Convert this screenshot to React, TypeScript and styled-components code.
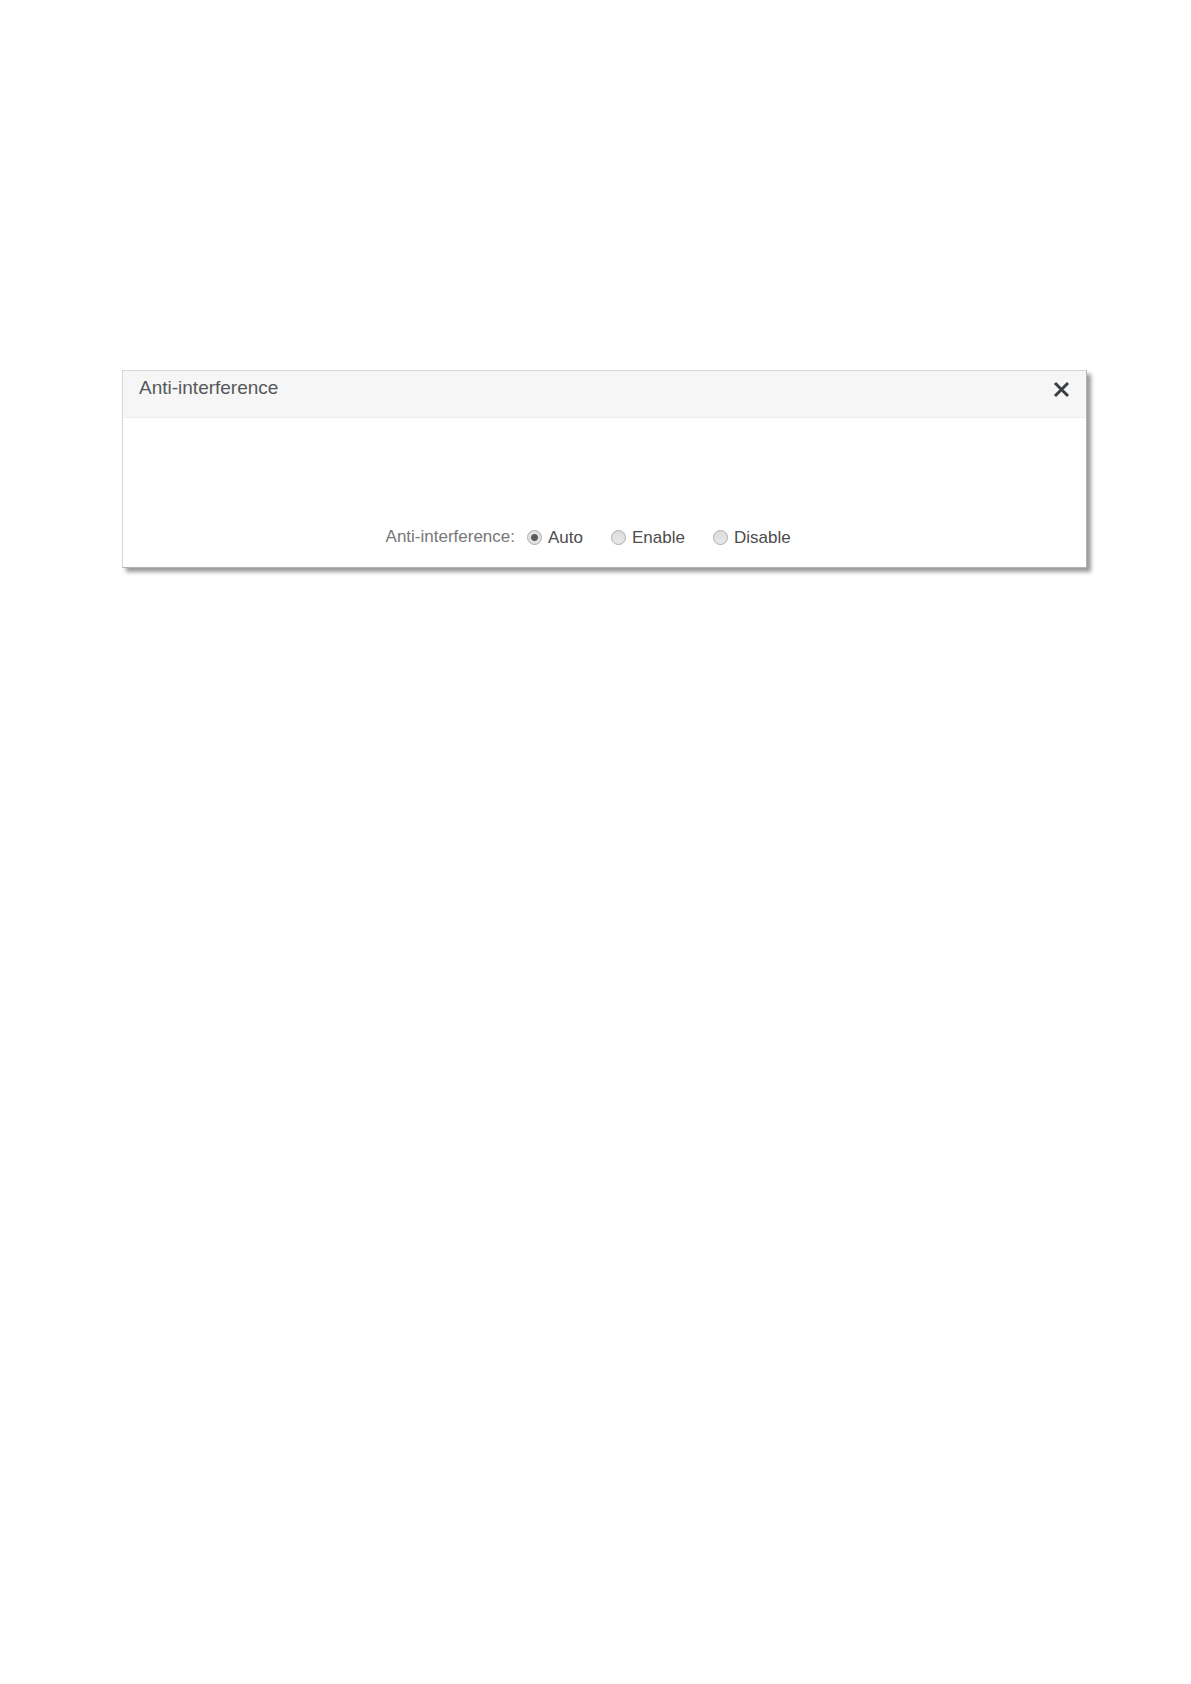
import React, { useState } from "react";
import styled, { createGlobalStyle } from "styled-components";

const GlobalStyle = createGlobalStyle`
  * { box-sizing: border-box; }
  body {
    margin: 0;
    background: #fff;
    font-family: "Liberation Sans", Arial, sans-serif;
  }
`;

const Page = styled.main`
  padding: 370px 104px 80px 122px;
`;

const Panel = styled.section`
  border: 1px solid #d6d6d6;
  border-bottom-color: #b4b4b4;
  border-right-color: #b4b4b4;
  background: #fff;
  box-shadow: 4px 4px 4px rgba(0, 0, 0, 0.4);
`;

const Header = styled.header`
  display: flex;
  justify-content: space-between;
  align-items: flex-start;
  height: 47px;
  padding: 6px 16px;
  background: #f6f6f6;
  border-bottom: 1px solid #eeeeee;
`;

const Title = styled.h1`
  margin: 0;
  font-size: 19px;
  line-height: 22px;
  font-weight: 400;
  color: #55585b;
`;

const CloseButton = styled.button`
  display: flex;
  margin: 4px 0 0;
  padding: 0;
  border: 0;
  background: none;
  color: #3c3f43;
  cursor: pointer;
`;

const Field = styled.div`
  display: grid;
  grid-template-columns: 392fr 559fr;
  column-gap: 12px;
  padding: 109px 0 19px;
  font-size: 17px;
  line-height: 20px;
`;

const FieldLabel = styled.span`
  text-align: right;
  color: #777;
`;

const Options = styled.div`
  display: flex;
  gap: 28px;
  padding-top: 1px;
`;

const Option = styled.label`
  display: flex;
  align-items: center;
  gap: 6px;
  color: #4c4c4c;
`;

const Radio = styled.input`
  appearance: none;
  width: 15px;
  height: 15px;
  margin: 0 0 1px;
  border: 1px solid #acacac;
  border-radius: 50%;
  background: ${(p) =>
    p.checked
      ? "radial-gradient(circle, #5c5c5c 3px, #e2e2e2 4px)"
      : "linear-gradient(#dcdcdc, #e8e8e8)"};
`;

const modes = ["Auto", "Enable", "Disable"];

export default function App() {
  const [mode, setMode] = useState("Auto");
  return (
    <>
      <GlobalStyle />
      <Page>
        <Panel>
          <Header>
            <Title>Anti-interference</Title>
            <CloseButton type="button" aria-label="Close">
              <svg width="17" height="17" viewBox="0 0 17 17" fill="none" stroke="currentColor" strokeWidth="3">
                <path d="M2 2 15 15M15 2 2 15" />
              </svg>
            </CloseButton>
          </Header>
          <Field role="radiogroup" aria-labelledby="mode-label">
            <FieldLabel id="mode-label">Anti-interference:</FieldLabel>
            <Options>
              {modes.map((m) => (
                <Option key={m}>
                  <Radio type="radio" name="mode" value={m} checked={mode === m} onChange={() => setMode(m)} />
                  {m}
                </Option>
              ))}
            </Options>
          </Field>
        </Panel>
      </Page>
    </>
  );
}
